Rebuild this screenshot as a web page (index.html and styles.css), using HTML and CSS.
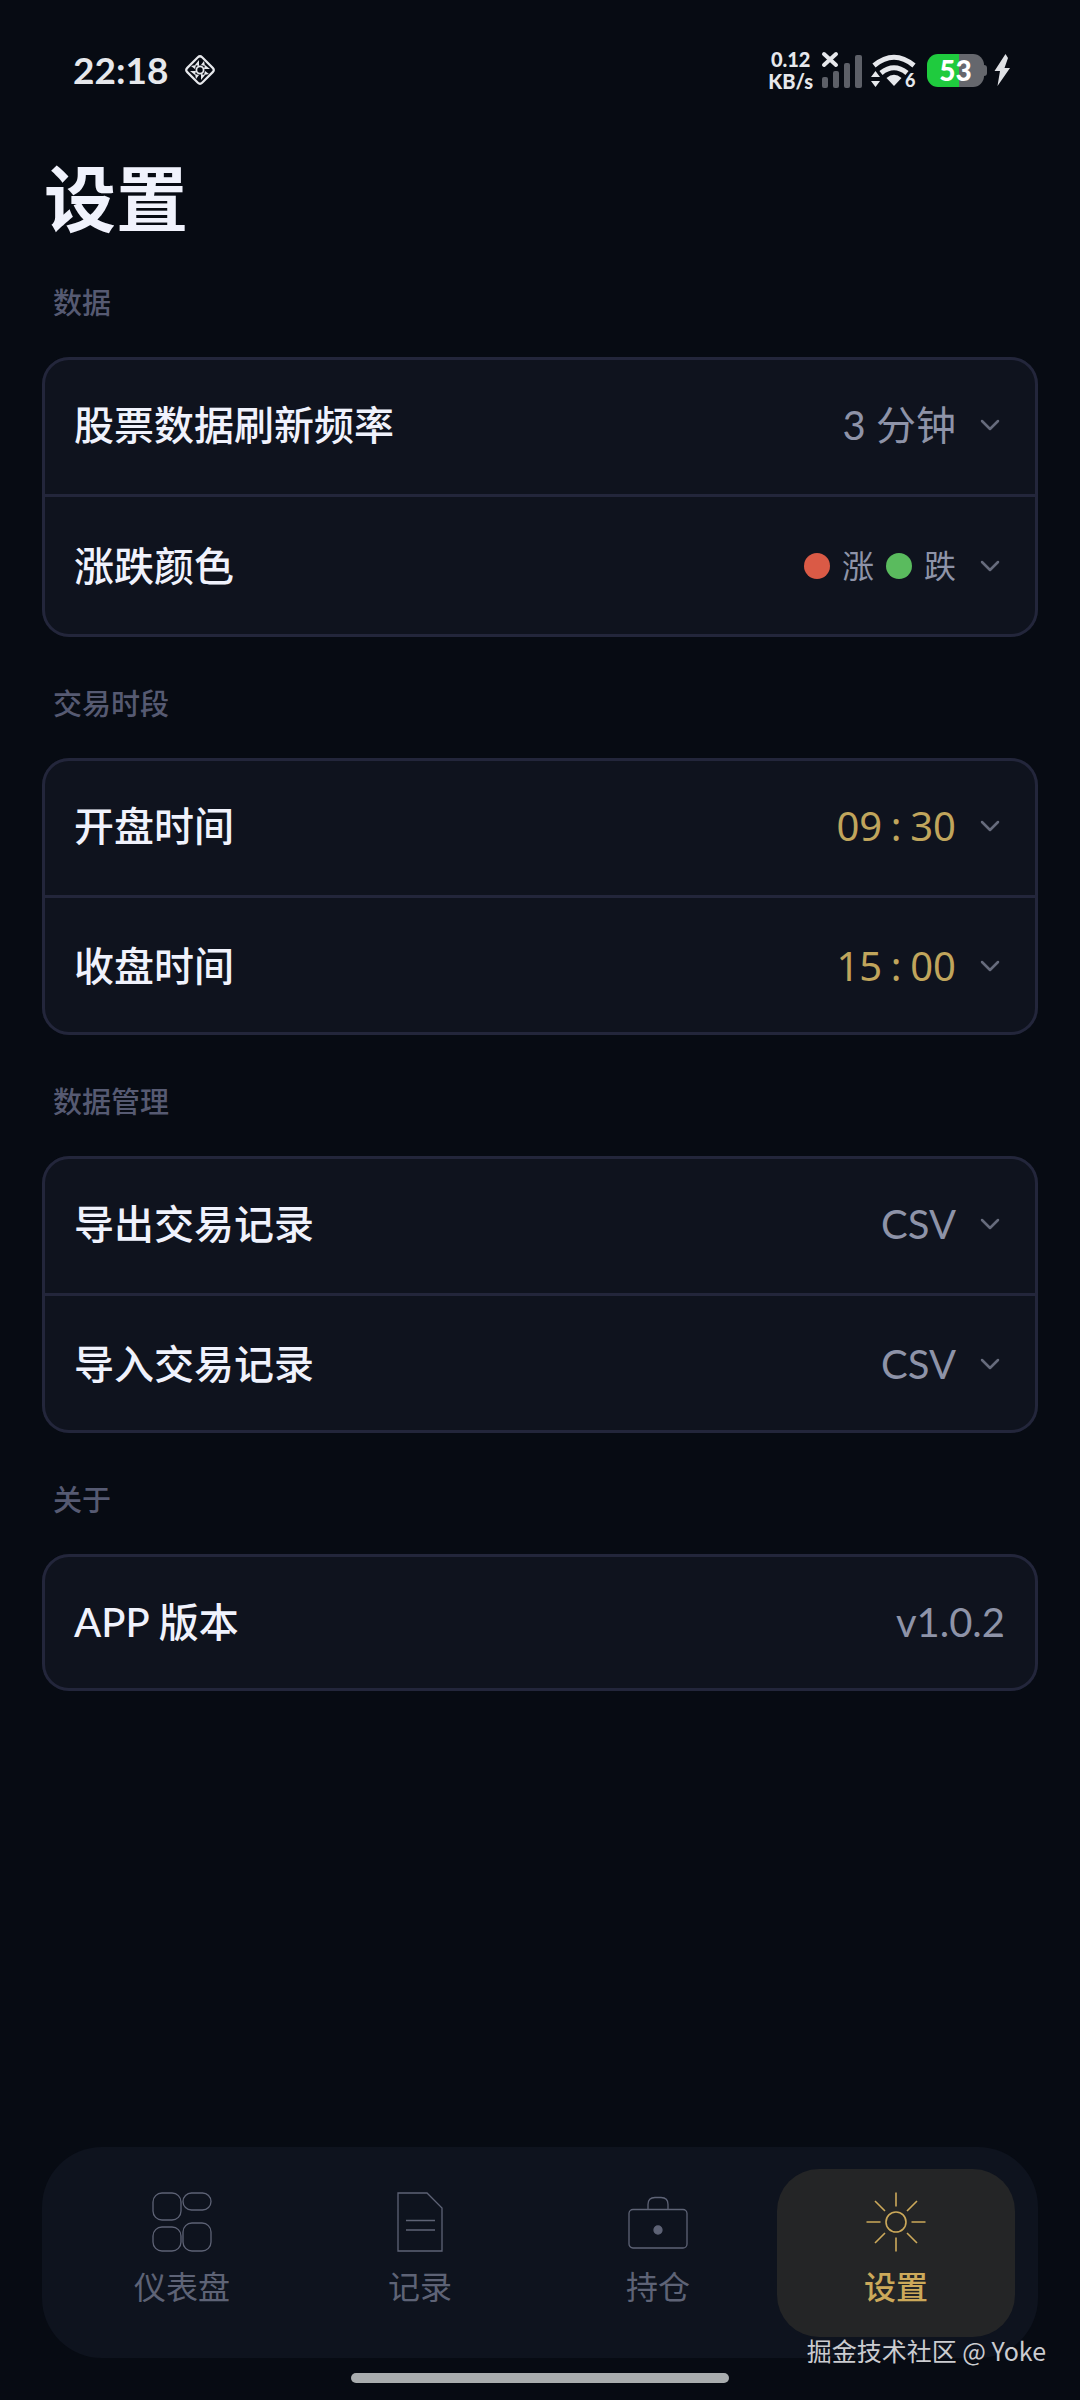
FILE: index.html
```html
<!DOCTYPE html>
<html lang="zh-CN">
<head>
    <meta charset="UTF-8">
    <meta name="viewport" content="width=device-width, initial-scale=1.0">
    <title>设置</title>
    <link rel="stylesheet" href="styles.css">
</head>
<body>
    <svg class="symbols" aria-hidden="true">
        <symbol id="chevron" viewBox="0 0 30 30">
            <path d="M7 11l8 8 8-8" fill="none" stroke="currentColor" stroke-width="2.5" stroke-linecap="round" stroke-linejoin="round"/>
        </symbol>
    </svg>

    <div class="status-bar">
        <div class="status-group">
            <span class="clock">22:18</span>
            <svg class="app-mark" viewBox="0 0 32 32" fill="none" stroke="currentColor">
                <rect x="5.5" y="5.5" width="21" height="21" rx="3" stroke-width="2.2" transform="rotate(45 16 16)"/>
                <g fill="currentColor" stroke="none">
                    <path d="M15 6v6l-4-1zM26 15l-6 0 1-4zM17 26v-6l4 1zM6 17h6l-1 4z"/>
                    <path d="M7 12l5-1-1 4zM20 7l1 5-4-1zM25 20l-5 1 1-4zM12 25l-1-5 4 1z"/>
                </g>
                <circle cx="16" cy="16" r="3.6" stroke-width="1.8"/>
            </svg>
        </div>
        <div class="status-group status-right">
            <div class="speed"><span>0.12</span><span>KB/s</span></div>
            <svg class="signal" viewBox="0 0 42 38">
                <g fill="#5d6068">
                    <rect x="1" y="26" width="6" height="11" rx="2"/>
                    <rect x="12" y="20" width="6" height="17" rx="2"/>
                    <rect x="23" y="12" width="6" height="25" rx="2"/>
                    <rect x="34" y="4" width="7" height="33" rx="2"/>
                </g>
                <path d="M3 3l12 11M15 3L3 14" stroke="#e6e8ec" stroke-width="4" stroke-linecap="round"/>
            </svg>
            <svg class="wifi" viewBox="0 0 46 38">
                <g fill="none" stroke="#e6e8ec" stroke-width="5">
                    <path d="M3 14.500Q23 -2 43 14.500"/>
                    <path d="M10 22Q23 11.500 36 22"/>
                </g>
                <path d="M15.500 27Q23 20.500 30.500 27L23 35z" fill="#e6e8ec"/>
                <path d="M0 26l4.500-6L9 26zM0 30h9l-4.500 6z" fill="#e6e8ec"/>
                <text x="34" y="36" class="wifi-gen">6</text>
            </svg>
            <div class="battery"><span>53</span></div>
            <svg class="bolt" viewBox="0 0 16 32">
                <path d="M11.500 0L0.500 17h5.500L3.500 32 16 14h-5.500L14 4z" fill="#dfe1e5"/>
            </svg>
        </div>
    </div>

    <main class="page">
        <h1>设置</h1>

        <h2>数据</h2>
        <div class="card">
            <button type="button" class="row">
                <span class="label">股票数据刷新频率</span>
                <span class="value">3 分钟</span>
                <svg class="chevron"><use href="#chevron"/></svg>
            </button>
            <button type="button" class="row row-colors">
                <span class="label">涨跌颜色</span>
                <span class="value colors">
                    <i class="dot up"></i><span>涨</span>
                    <i class="dot down"></i><span>跌</span>
                </span>
                <svg class="chevron"><use href="#chevron"/></svg>
            </button>
        </div>

        <h2>交易时段</h2>
        <div class="card">
            <button type="button" class="row">
                <span class="label">开盘时间</span>
                <span class="value time">09<span class="colon">:</span>30</span>
                <svg class="chevron"><use href="#chevron"/></svg>
            </button>
            <button type="button" class="row">
                <span class="label">收盘时间</span>
                <span class="value time">15<span class="colon">:</span>00</span>
                <svg class="chevron"><use href="#chevron"/></svg>
            </button>
        </div>

        <h2>数据管理</h2>
        <div class="card">
            <button type="button" class="row">
                <span class="label">导出交易记录</span>
                <span class="value">CSV</span>
                <svg class="chevron"><use href="#chevron"/></svg>
            </button>
            <button type="button" class="row">
                <span class="label">导入交易记录</span>
                <span class="value">CSV</span>
                <svg class="chevron"><use href="#chevron"/></svg>
            </button>
        </div>

        <h2>关于</h2>
        <div class="card">
            <div class="row">
                <span class="label">APP 版本</span>
                <span class="value">v1.0.2</span>
            </div>
        </div>
    </main>

    <footer class="bottom">
        <nav class="tabs">
            <a href="#dashboard" class="tab">
                <svg viewBox="0 0 60 60">
                    <rect x="1" y="1" width="28" height="27" rx="9"/>
                    <rect x="31" y="1" width="28" height="17" rx="8.500"/>
                    <rect x="1" y="35" width="28" height="24" rx="9"/>
                    <rect x="31" y="31" width="28" height="28" rx="9"/>
                </svg>
                <span>仪表盘</span>
            </a>
            <a href="#records" class="tab">
                <svg viewBox="0 0 60 60">
                    <path d="M8 1h29l15 15v43H8zM16 28.500h29M16 38h29"/>
                </svg>
                <span>记录</span>
            </a>
            <a href="#positions" class="tab">
                <svg viewBox="0 0 60 60">
                    <rect x="1" y="17.500" width="58" height="38.500" rx="4"/>
                    <path d="M20 17.500v-5q0-7 7-7h6q7 0 7 7v5"/>
                    <circle class="solid" cx="30" cy="38" r="4"/>
                </svg>
                <span>持仓</span>
            </a>
            <a href="#settings" class="tab active">
                <svg viewBox="0 0 60 60">
                    <circle cx="30" cy="30" r="10"/>
                    <path d="M30 .5v14M30 45.500v14M.5 30h14M45.500 30h14M9 9l10 10M41 41l10 10M9 51l10-10M41 19L51 9"/>
                </svg>
                <span>设置</span>
            </a>
        </nav>
        <div class="home-indicator"></div>
        <div class="watermark">掘金技术社区 @ Yoke</div>
    </footer>
</body>
</html>
```

FILE: styles.css
```css
* {
    box-sizing: border-box;
}

body {
    margin: 0;
    min-height: 100vh;
    display: flex;
    flex-direction: column;
    background-color: #070b13;
    color: #f0f2fc;
    font-family: Lato, "Noto Sans CJK SC", sans-serif;
    font-size: 40px;
}

.symbols {
    display: none;
}

/* status bar */
.status-bar {
    display: flex;
    justify-content: space-between;
    align-items: center;
    height: 140px;
    padding: 0 70px 0 73px;
    color: #e6e8ec;
}

.status-group {
    display: flex;
    align-items: center;
    gap: 16px;
}

.status-right {
    gap: 8px;
}

.clock {
    font-size: 37px;
    font-weight: bold;
    line-height: 40px;
}

.app-mark {
    width: 32px;
    height: 32px;
}

.speed {
    display: flex;
    flex-direction: column;
    align-items: center;
    font-size: 20px;
    font-weight: 900;
    line-height: 22px;
}

.signal {
    width: 42px;
    height: 38px;
}

.wifi {
    width: 46px;
    height: 38px;
    overflow: visible;
}

.wifi-gen {
    fill: #e6e8ec;
    font-size: 18px;
    font-weight: 900;
}

.battery {
    position: relative;
    width: 57px;
    height: 33px;
    margin: 0 2px;
    border-radius: 11px;
    background: linear-gradient(to right, #1fcb3e 56%, #65676d 56%);
    color: #fff;
    font-size: 28px;
    font-weight: 900;
    line-height: 33px;
    text-align: center;
}

.battery::after {
    content: "";
    position: absolute;
    left: 100%;
    top: 11px;
    width: 3px;
    height: 11px;
    border-radius: 0 3px 3px 0;
    background-color: #65676d;
}

.bolt {
    width: 16px;
    height: 32px;
}

/* settings list */
.page {
    padding: 0 42px;
}

h1 {
    margin: 0;
    padding-left: 2px;
    font-size: 72px;
    font-weight: bold;
    line-height: 116px;
}

h2 {
    margin: 46px 0 33px;
    padding-left: 11px;
    color: #565a72;
    font-size: 29px;
    font-weight: 500;
    line-height: 42px;
}

h1 + h2 {
    margin-top: 26px;
}

.card {
    border-radius: 27px;
    background-color: #0f131e;
    box-shadow: inset 0 0 0 3px #23263b;
}

.row {
    display: flex;
    align-items: center;
    width: 100%;
    min-height: 137px;
    padding: 0 33px 2px 32px;
    border: 0;
    background: none;
    color: inherit;
    font: inherit;
    line-height: 48px;
    text-align: left;
}

button.row {
    cursor: pointer;
}

.row + .row {
    min-height: 140px;
    border-top: 3px solid #23263b;
}

.row + .row-colors {
    min-height: 143px;
}

.label {
    flex: 1;
    font-weight: 500;
}

.value {
    color: #8e93a8;
}

.colors {
    display: flex;
    align-items: center;
    gap: 12px;
    font-size: 32px;
}

.dot {
    width: 26px;
    height: 26px;
    border-radius: 50%;
}

.up {
    background-color: #da5a46;
}

.down {
    background-color: #5abb5e;
}

.time {
    color: #c0a55c;
    font-family: "Noto Sans", sans-serif;
}

.colon {
    display: inline-block;
    width: 28px;
    text-align: center;
}

.chevron {
    width: 30px;
    height: 30px;
    margin-left: 19px;
    color: #666b7c;
}

/* bottom navigation */
.bottom {
    position: relative;
    margin-top: auto;
    padding: 0 42px 17px;
}

.tabs {
    display: flex;
    padding: 22px 23px 21px 21px;
    border-radius: 60px;
    background-color: #0e131e;
}

.tab {
    flex: 1;
    display: flex;
    flex-direction: column;
    align-items: center;
    gap: 13px;
    padding: 23px 0 28px;
    border-radius: 42px;
    color: #5e6376;
    font-size: 32px;
    line-height: 44px;
    text-decoration: none;
}

.tab svg {
    width: 60px;
    height: 60px;
    fill: none;
    stroke: currentColor;
    stroke-width: 1.3;
}

.tab .solid {
    fill: currentColor;
}

.active {
    background-color: #242526;
    color: #cca95a;
    font-weight: 500;
}

.active svg {
    stroke-width: 1.6;
}

.home-indicator {
    width: 38%;
    height: 10px;
    margin: 15px auto 0;
    border-radius: 5px;
    background-color: #a9adaf;
}

.watermark {
    position: absolute;
    right: 34px;
    bottom: 32px;
    color: #cbccd0;
    font-family: "Noto Sans CJK SC", sans-serif;
    font-size: 25px;
    line-height: 36px;
}
```
